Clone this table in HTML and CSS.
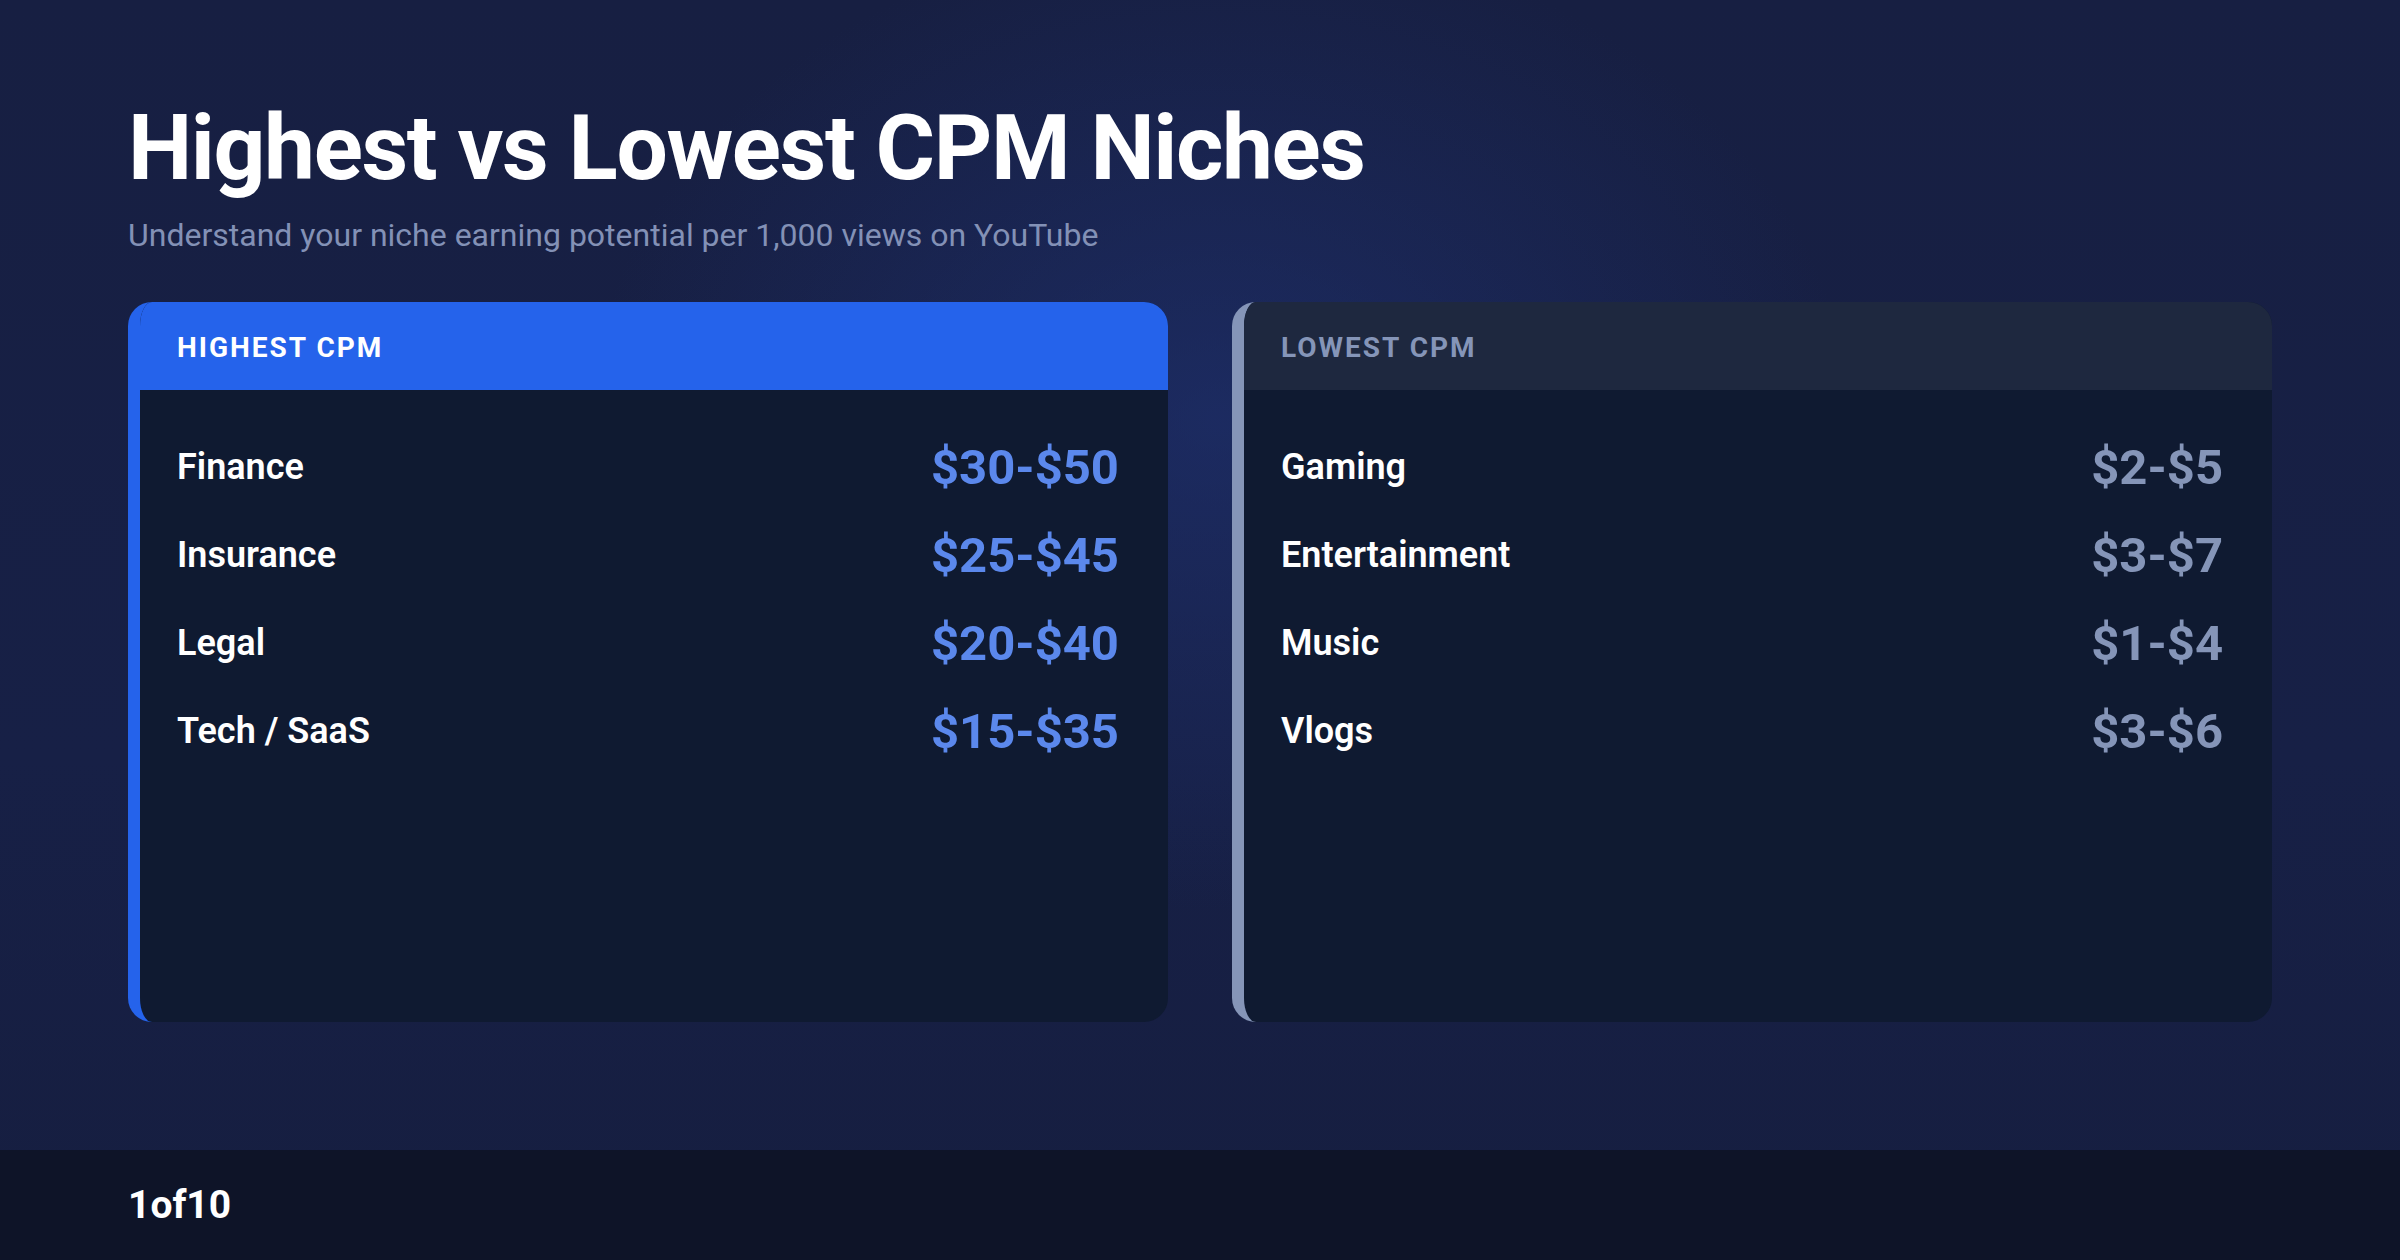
FILE: index.html
```html
<!DOCTYPE html>
<html>
<head>
<meta charset="utf-8">
<link rel="stylesheet" href="styles.css">
</head>
<body>
<div class="slide">
  <main class="content">
    <h1 class="title">Highest vs Lowest CPM Niches</h1>
    <p class="subtitle">Understand your niche earning potential per 1,000 views on YouTube</p>
    <div class="cards">
      <section class="card card-high">
        <div class="card-head">HIGHEST CPM</div>
        <ul class="rows">
          <li class="row"><span class="label">Finance</span><span class="price">$30-$50</span></li>
          <li class="row"><span class="label">Insurance</span><span class="price">$25-$45</span></li>
          <li class="row"><span class="label">Legal</span><span class="price">$20-$40</span></li>
          <li class="row"><span class="label">Tech / SaaS</span><span class="price">$15-$35</span></li>
        </ul>
      </section>
      <section class="card card-low">
        <div class="card-head">LOWEST CPM</div>
        <ul class="rows">
          <li class="row"><span class="label">Gaming</span><span class="price">$2-$5</span></li>
          <li class="row"><span class="label">Entertainment</span><span class="price">$3-$7</span></li>
          <li class="row"><span class="label">Music</span><span class="price">$1-$4</span></li>
          <li class="row"><span class="label">Vlogs</span><span class="price">$3-$6</span></li>
        </ul>
      </section>
    </div>
  </main>
  <footer class="footer">1of10</footer>
</div>
</body>
</html>
```

FILE: styles.css
```css
* { box-sizing: border-box; margin: 0; padding: 0; }
html, body { width: 2400px; height: 1260px; overflow: hidden; }
body {
  font-family: Roboto, "Liberation Sans", sans-serif;
  background: #161e40;
  color: #ffffff;
}
.slide {
  width: 2400px;
  height: 1260px;
  display: flex;
  flex-direction: column;
  background:
    radial-gradient(ellipse 900px 700px at 1220px 420px, rgba(32, 52, 120, 0.55), rgba(32, 52, 120, 0) 70%),
    linear-gradient(180deg, #171f42 0%, #172046 60%, #161e40 100%);
}
.content {
  flex: 1;
  padding: 103px 128px 0 128px;
}
.title {
  font-size: 91px;
  font-weight: 700;
  line-height: 1;
  letter-spacing: -1.4px;
  color: #ffffff;
}
.subtitle {
  margin-top: 22px;
  font-size: 32px;
  font-weight: 400;
  color: #8391b6;
  line-height: 1.2;
}
.cards {
  margin-top: 48px;
  display: grid;
  grid-template-columns: 1040px 1040px;
  gap: 64px;
}
.card {
  height: 720px;
  border-radius: 24px;
  overflow: hidden;
  background: #0f1a31;
  border-left: 12px solid;
}
.card-high { border-left-color: #2563eb; }
.card-low { border-left-color: #8595b8; }
.card-head {
  height: 88px;
  display: flex;
  align-items: center;
  padding-left: 37px;
  padding-top: 2px;
  font-size: 28px;
  font-weight: 700;
  letter-spacing: 2px;
}
.card-high .card-head { background: #2563eb; color: #ffffff; }
.card-low .card-head { background: #1e283f; color: #8595b8; }
.rows {
  list-style: none;
  padding: 33px 49px 0 37px;
}
.row {
  height: 88px;
  display: flex;
  align-items: center;
  justify-content: space-between;
}
.label {
  font-size: 36px;
  font-weight: 600;
  color: #ffffff;
}
.price {
  font-size: 49px;
  font-weight: 700;
}
.card-high .price { color: #5b88ec; }
.card-low .price { color: #8595b8; }
.footer {
  height: 110px;
  flex: none;
  background: #0e1428;
  display: flex;
  align-items: center;
  padding-left: 128px;
  font-size: 39px;
  font-weight: 700;
  color: #ffffff;
}
```
